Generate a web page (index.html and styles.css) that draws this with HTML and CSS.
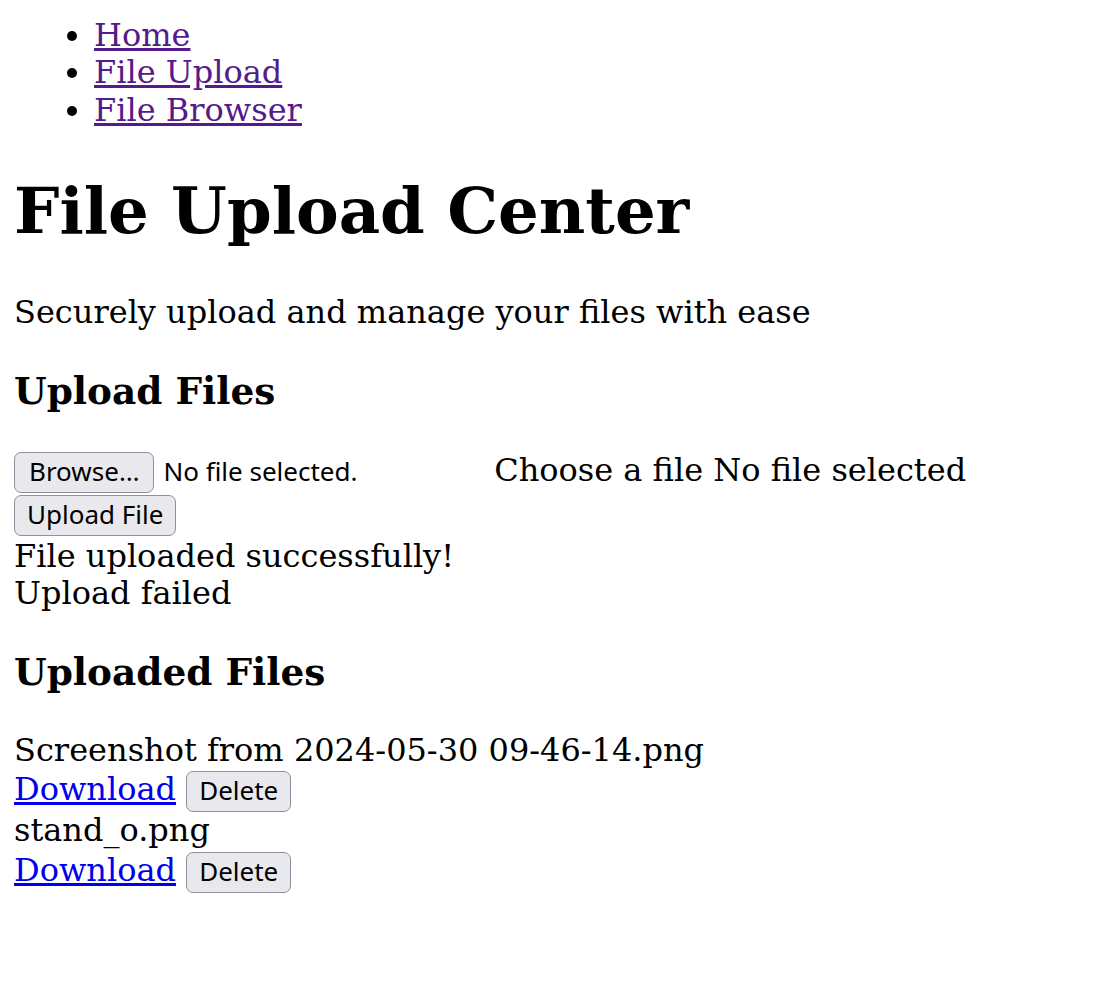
FILE: index.html
```html
<!DOCTYPE html>
<html lang="en">
<head>
<meta charset="utf-8">
<title>File Upload Center</title>
<link rel="stylesheet" href="styles.css">
</head>
<body>
<nav class="nav">
  <ul class="nav-list">
    <li><a class="visited" href="#">Home</a></li>
    <li><a class="visited" href="#">File Upload</a></li>
    <li><a class="visited" href="#">File Browser</a></li>
  </ul>
</nav>
<header class="header">
  <h1 class="title">File Upload Center</h1>
  <p class="lead">Securely upload and manage your files with ease</p>
</header>
<section class="upload">
  <h3 class="section-title">Upload Files</h3>
  <form class="upload-form">
    <div class="row"><span class="file-input"><button type="button" class="btn btn-browse">Browse…</button><span class="file-status">No file selected.</span></span> <label class="choose">Choose a file</label> <span class="chosen">No file selected</span></div>
    <div class="row"><button type="button" class="btn">Upload File</button></div>
  </form>
  <div class="messages">
    <div class="msg">File uploaded successfully!</div>
    <div class="msg">Upload failed</div>
  </div>
</section>
<section class="files">
  <h3 class="section-title">Uploaded Files</h3>
  <div class="file">
    <div class="file-name">Screenshot from 2024-05-30 09-46-14.png</div>
    <div class="file-actions"><a class="link" href="#">Download</a> <button type="button" class="btn">Delete</button></div>
  </div>
  <div class="file">
    <div class="file-name">stand_o.png</div>
    <div class="file-actions"><a class="link" href="#">Download</a> <button type="button" class="btn">Delete</button></div>
  </div>
</section>
</body>
</html>
```
FILE: styles.css
```css
html, body {
  background: #ffffff;
}
body {
  margin: 0;
  padding: 0 14px;
  color: #000000;
  font-family: "DejaVu Serif", serif;
  font-size: 32px;
  line-height: 37.3px;
}
.nav-list {
  margin: 17px 0 0;
  padding-left: 80px;
}
.visited {
  color: #551a8b;
}
.link {
  color: #0000ee;
}
.title {
  margin: 45.3px 0 0;
  font-size: 64px;
  line-height: 74.5px;
  font-weight: bold;
}
.lead {
  margin: 44.9px 0 0;
}
.section-title {
  margin: 38.9px 0 37px;
  font-size: 37.44px;
  line-height: 43.6px;
  font-weight: bold;
}
.upload-form {
  margin: 0;
}
.file-input {
  display: inline-block;
  width: 470px;
  white-space: nowrap;
}
.file-status {
  margin-left: 9px;
  font-family: "Noto Sans", "Open Sans", sans-serif;
  font-size: 26px;
}
.btn {
  margin: 2px 0 0;
  padding: 3px 12px 5px;
  font-family: "Noto Sans", "Open Sans", sans-serif;
  font-size: 26px;
  line-height: 31px;
  color: #000000;
  background: #e9e9ed;
  border: 1px solid #8f8f9d;
  border-radius: 7px;
  vertical-align: baseline;
}
.btn-browse {
  padding-left: 14px;
  padding-right: 14px;
}
.messages {
  margin-top: 1.3px;
}
.files .section-title {
  margin-top: 39.2px;
}
```
